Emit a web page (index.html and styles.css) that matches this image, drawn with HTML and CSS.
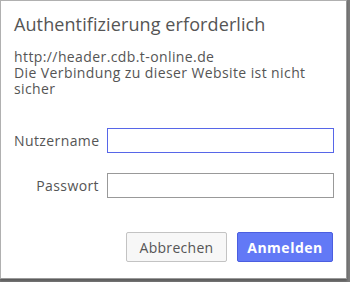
FILE: index.html
```html
<!DOCTYPE html>
<html lang="de">
<head>
<meta charset="utf-8">
<title>Authentifizierung erforderlich</title>
<link rel="stylesheet" href="styles.css">
</head>
<body>
<div class="dialog">
  <h1 class="title">Authentifizierung erforderlich</h1>
  <div class="info">
    <div>http://header.cdb.t-online.de</div>
    <div>Die Verbindung zu dieser Website ist nicht sicher</div>
  </div>
  <form class="form">
    <label class="label" for="user">Nutzername</label>
    <input class="field focused" id="user" type="text">
    <label class="label" for="pass">Passwort</label>
    <input class="field" id="pass" type="password">
  </form>
  <div class="actions">
    <button class="btn cancel" type="button">Abbrechen</button>
    <button class="btn primary" type="button">Anmelden</button>
  </div>
</div>
</body>
</html>
```
FILE: styles.css
```css
html, body {
  margin: 0;
  padding: 0;
}
body {
  width: 350px;
  height: 282px;
  background: #7a7a7a;
  overflow: hidden;
  font-family: "Open Sans", "DejaVu Sans", sans-serif;
  color: #555;
}
.dialog {
  box-sizing: border-box;
  width: 347px;
  height: 279px;
  background: #fff;
  border: 1px solid #b0b0b0;
  border-right-color: #9a9a9a;
  border-bottom-color: #9a9a9a;
  box-shadow: 0 2px 2px rgba(0,0,0,0.25);
  padding: 11px 12px 0 13px;
  display: flex;
  flex-direction: column;
}
.title {
  margin: 0;
  font-size: 18px;
  line-height: 24px;
  font-weight: normal;
  letter-spacing: 0.1px;
  color: #555;
}
.info {
  margin-top: 13px;
  font-size: 14px;
  line-height: 16px;
  letter-spacing: 0.4px;
  width: 300px;
}
.form {
  margin: 31px 0 0 0;
  display: grid;
  grid-template-columns: 85px 227px;
  column-gap: 8px;
  row-gap: 20px;
  align-items: center;
}
.label {
  text-align: right;
  font-size: 14px;
  letter-spacing: 0.4px;
}
.field {
  box-sizing: border-box;
  height: 25px;
  width: 227px;
  margin: 0;
  border: 1px solid #999;
  border-radius: 0;
  outline: none;
  background: #fff;
}
.field.focused {
  border-color: #5766e8;
}
.actions {
  margin-top: 34px;
  display: flex;
  justify-content: flex-end;
  gap: 10px;
  padding-right: 1px;
}
.btn {
  box-sizing: border-box;
  height: 30px;
  margin: 0;
  font-family: "Open Sans", "DejaVu Sans", sans-serif;
  font-size: 14px;
  letter-spacing: 0.3px;
  border-radius: 2px;
  padding: 0;
}
.cancel {
  width: 101px;
  background: #f7f7f7;
  border: 1px solid #c3c3c3;
  color: #555;
}
.primary {
  width: 96px;
  background: #6279f6;
  border: 1px solid #4b5ee0;
  color: #fff;
  font-weight: bold;
  letter-spacing: 0.5px;
}
```
